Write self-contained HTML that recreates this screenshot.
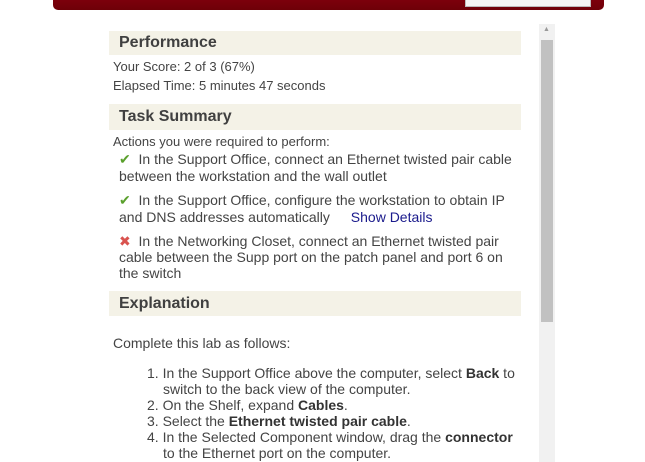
<!DOCTYPE html>
<html><head><style>
body{margin:0;width:645px;height:462px;overflow:hidden;background:#fff;font-family:"Liberation Sans",Arial,sans-serif;color:#333;position:relative}
.a{position:absolute;white-space:nowrap}
.top{position:absolute;left:53px;top:-10px;width:551px;height:20px;background:linear-gradient(#8a0010,#6e0008);border-radius:0 0 5px 5px}
.btn{position:absolute;left:465px;top:-5px;width:124px;height:10px;border:1px solid #bbb;background:#f4f4f4}
.h{position:absolute;left:109px;width:412px;background:#f4f2e7;font-weight:bold;font-size:16px;color:#404040;box-sizing:border-box;padding-left:10px}
.s{font-size:13px;color:#444}
.t{font-size:14px;color:#444}
.sb{position:absolute;left:539px;top:24px;width:16px;height:438px;background:#f1f1f1}
.th{position:absolute;left:541px;top:40px;width:12px;height:282px;background:#c1c1c1}
b{color:#333}
</style></head><body>
<div class="top"></div><div class="btn"></div>
<div class="h" style="top:31px;height:24px;line-height:24px">Performance</div>
<div class="a s" style="left:113px;top:59px">Your Score: 2 of 3 (67%)</div>
<div class="a s" style="left:113px;top:78px">Elapsed Time: 5 minutes 47 seconds</div>
<div class="h" style="top:104px;height:26px;line-height:26px">Task Summary</div>
<div class="a s" style="left:113px;top:134px">Actions you were required to perform:</div>
<div class="a t" style="left:119px;top:151px"><span style="color:#5aa02c">✔</span>&nbsp; In the Support Office, connect an Ethernet twisted pair cable</div>
<div class="a t" style="left:119px;top:168px">between the workstation and the wall outlet</div>
<div class="a t" style="left:119px;top:192px"><span style="color:#5aa02c">✔</span>&nbsp; In the Support Office, configure the workstation to obtain IP</div>
<div class="a t" style="left:119px;top:209px">and DNS addresses automatically <span style="margin-left:17px;color:#1a1a8c">Show Details</span></div>
<div class="a t" style="left:119px;top:233px"><span style="color:#d9534f">✖</span>&nbsp; In the Networking Closet, connect an Ethernet twisted pair</div>
<div class="a t" style="left:119px;top:249px">cable between the Supp port on the patch panel and port 6 on</div>
<div class="a t" style="left:119px;top:265px">the switch</div>
<div class="h" style="top:291px;height:25px;line-height:25px">Explanation</div>
<div class="a t" style="left:113px;top:335px">Complete this lab as follows:</div>
<div class="a t" style="left:147px;top:365px">1. In the Support Office above the computer, select <b>Back</b> to</div>
<div class="a t" style="left:163px;top:381px">switch to the back view of the computer.</div>
<div class="a t" style="left:147px;top:397px">2. On the Shelf, expand <b>Cables</b>.</div>
<div class="a t" style="left:147px;top:413px">3. Select the <b>Ethernet twisted pair cable</b>.</div>
<div class="a t" style="left:147px;top:429px">4. In the Selected Component window, drag the <b>connector</b></div>
<div class="a t" style="left:163px;top:445px">to the Ethernet port on the computer.</div>
<div class="sb"></div><div class="th"></div>
<div class="a" style="left:543px;top:26px;font-size:7px;color:#999">▲</div>
</body></html>
